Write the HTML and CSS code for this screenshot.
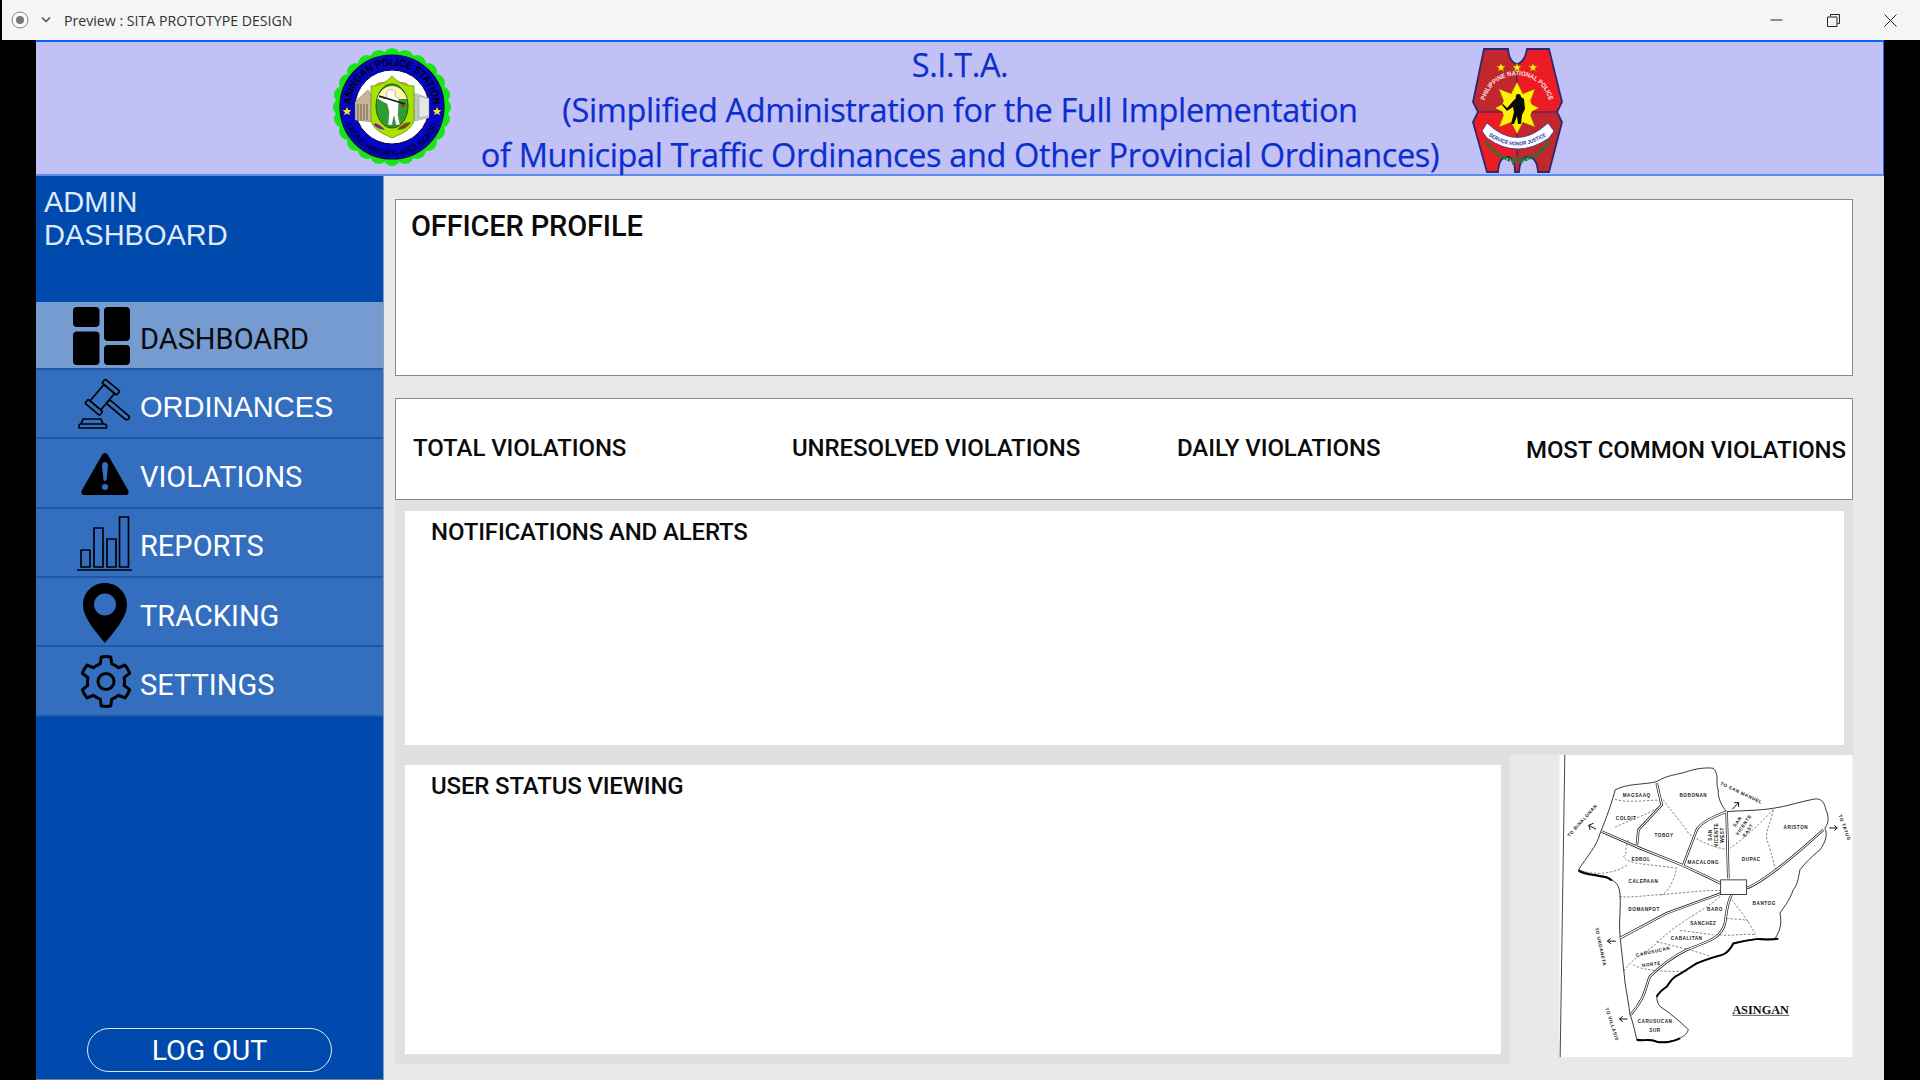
FILE: index.html
```html
<!DOCTYPE html>
<html lang="en">
<head>
  <meta charset="UTF-8">
  <meta name="viewport" content="width=device-width, initial-scale=1.0">
  <title>Preview : SITA PROTOTYPE DESIGN</title>
  <link rel="stylesheet" href="styles.css">
</head>
<body>
  <div class="titlebar">
    <svg class="rec-icon" width="20" height="20" viewBox="0 0 20 20">
      <circle cx="10" cy="10" r="8" fill="#fafafa" stroke="#8a8a8a" stroke-width="1"/>
      <circle cx="10" cy="10" r="4" fill="#777"/>
    </svg>
    <svg class="chev" width="12" height="8" viewBox="0 0 12 8">
      <path d="M2 1.5 L6 5.5 L10 1.5" fill="none" stroke="#444" stroke-width="1.3"/>
    </svg>
    <span class="titlebar-text">Preview : SITA PROTOTYPE DESIGN</span>
    <div class="win-controls">
      <svg width="13" height="13" viewBox="0 0 13 13"><path d="M0.5 6 H12.5" stroke="#222" stroke-width="1"/></svg>
      <svg width="13" height="13" viewBox="0 0 13 13"><path d="M3.5 2.5 V0.5 H12.5 V9.5 H10.5 M0.5 3 H10 V12.5 H0.5 Z" fill="none" stroke="#222" stroke-width="1"/></svg>
      <svg width="13" height="13" viewBox="0 0 13 13"><path d="M0.5 0.5 L12.5 12.5 M12.5 0.5 L0.5 12.5" stroke="#222" stroke-width="1"/></svg>
    </div>
  </div>

  <div class="app">
    <header class="banner">
      <svg class="logo-left" width="135" height="130" viewBox="0 0 135 130">
        <defs>
          <path id="arcTop" d="M26.8 73 A41 41 0 1 1 107.2 73"/>
          <path id="arcBottom" d="M19 75 A49 49 0 0 0 115 75"/>
        </defs>
        <g fill="#16e616">
          <circle cx="67" cy="15" r="9"/><circle cx="80" cy="17" r="9"/><circle cx="92" cy="22" r="9"/><circle cx="103" cy="30" r="9"/>
          <circle cx="111" cy="41" r="9"/><circle cx="116" cy="53" r="9"/><circle cx="117" cy="65" r="9"/><circle cx="116" cy="77" r="9"/>
          <circle cx="111" cy="89" r="9"/><circle cx="103" cy="100" r="9"/><circle cx="92" cy="108" r="9"/><circle cx="80" cy="113" r="9"/>
          <circle cx="67" cy="115" r="9"/><circle cx="54" cy="113" r="9"/><circle cx="42" cy="108" r="9"/><circle cx="31" cy="100" r="9"/>
          <circle cx="23" cy="89" r="9"/><circle cx="18" cy="77" r="9"/><circle cx="17" cy="65" r="9"/><circle cx="18" cy="53" r="9"/>
          <circle cx="23" cy="41" r="9"/><circle cx="31" cy="30" r="9"/><circle cx="42" cy="22" r="9"/><circle cx="54" cy="17" r="9"/>
        </g>
        <circle cx="67" cy="65" r="52" fill="#0505c8" stroke="#0a0a3a" stroke-width="1.2"/>
        <circle cx="67" cy="65" r="37" fill="#fff" stroke="#0a0a3a" stroke-width="1"/>
        <text class="seal-top"><textPath href="#arcTop" startOffset="50%" text-anchor="middle" textLength="124" lengthAdjust="spacingAndGlyphs">ASINGAN POLICE STATION</textPath></text>
        <text class="seal-bottom"><textPath href="#arcBottom" startOffset="50%" text-anchor="middle" textLength="118" lengthAdjust="spacingAndGlyphs">LAGING HANDANG MAGLINGKOD</textPath></text>
        <path d="M22 65 l1.3 3 3.2 .2 -2.5 2 .9 3.1 -2.9 -1.7 -2.9 1.7 .9 -3.1 -2.5 -2 3.2 -.2Z" fill="#ffe600"/>
        <path d="M112 65 l1.3 3 3.2 .2 -2.5 2 .9 3.1 -2.9 -1.7 -2.9 1.7 .9 -3.1 -2.5 -2 3.2 -.2Z" fill="#ffe600"/>
        <path d="M30 78 V60 L43 48 L50 60 V80Z" fill="#c9b59a" stroke="#6b5a48" stroke-width=".5"/>
        <path d="M33 62 V78 M36 62 V78 M39 62 V78 M42 62 V78" stroke="#6b5a48" stroke-width="1"/>
        <path d="M88 50 L104 56 V76 L88 80Z" fill="#b9c9b9"/>
        <path d="M94 54 L104 57 V74 L94 76Z" fill="#e6e6e6" stroke="#8a9a8a" stroke-width=".5"/>
        <path d="M46 44 Q58 44 67 34 Q76 44 89 44 V78 Q88 88 67 96 Q47 88 46 78Z" fill="#a5e300" stroke="#6e8f20" stroke-width=".8"/>
        <path d="M50 44 Q54 40 60 41 M84 44 Q80 40 74 41" fill="none" stroke="#b89a30" stroke-width="1.500"/>
        <ellipse cx="67" cy="64" rx="16" ry="22" fill="#2f9c2f" stroke="#304a10" stroke-width="1"/>
        <path d="M52 57 A16 20 0 0 1 82 57Z" fill="#fdf5b0"/>
        <path d="M62 54 a4.500 4.500 0 1 1 8 0 l4 3 -1 16 2 10 h-4 l-2 -9 -2 9 h-4 l1 -13 -2 -8 -4 -2 -5 -3 1 -2 6 2Z" fill="#fff" stroke="#555" stroke-width=".4"/>
        <path d="M54 54 L80 62" stroke="#111" stroke-width="1.400"/>
        <circle cx="78" cy="63" r="1.600" fill="#d01020"/>
        <path d="M50 81 Q56 83 60 88 Q52 87 49 83Z" fill="#7a1fa0"/>
        <path d="M72 88 Q78 80 86 80 Q83 87 72 88Z" fill="#7a4a1e"/>
      </svg>

      <div class="banner-title">
        <div>S.I.T.A.</div>
        <div>(Simplified Administration for the Full Implementation</div>
        <div>of Municipal Traffic Ordinances and Other Provincial Ordinances)</div>
      </div>

      <svg class="logo-right" width="105" height="130" viewBox="0 0 105 130">
        <defs>
          <path id="arcPnp" d="M19.500 70 A33 33 0 1 1 84.500 70"/>
          <path id="arcMotto" d="M21 90 Q52 113 84 90"/>
          <clipPath id="pnpClip">
            <path d="M19 5 H43 Q44 18 52 20 Q60 18 62 5 H84 L97 58 L92 68 L97 78 L84 128 H73 Q72 113 63 113 Q55 113 54 128 H50 Q50 113 42 113 Q34 113 33 128 H22 L8 78 L13 68 L8 58Z"/>
          </clipPath>
        </defs>
        <path d="M19 5 H43 Q44 18 52 20 Q60 18 62 5 H84 L97 58 L92 68 L97 78 L84 128 H73 Q72 113 63 113 Q55 113 54 128 H50 Q50 113 42 113 Q34 113 33 128 H22 L8 78 L13 68 L8 58Z" fill="#ed1c24"/>
        <g clip-path="url(#pnpClip)">
          <rect x="0" y="0" width="52" height="68" fill="#c1272d"/>
          <rect x="52" y="68" width="52" height="62" fill="#c1272d"/>
        </g>
        <path d="M19 5 H43 Q44 18 52 20 Q60 18 62 5 H84 L97 58 L92 68 L97 78 L84 128 H73 Q72 113 63 113 Q55 113 54 128 H50 Q50 113 42 113 Q34 113 33 128 H22 L8 78 L13 68 L8 58Z" fill="none" stroke="#2b2a6e" stroke-width="1.800"/>
        <path d="M13 68 H92 M52 20 V113" stroke="#2b2a6e" stroke-width="1.200"/>
        <g fill="#fff200" stroke="#7a5a00" stroke-width=".3">
          <path d="M36 19 l1.200 3 3.200 .2 -2.500 2 .9 3.100 -2.800 -1.700 -2.800 1.700 .9 -3.100 -2.500 -2 3.200 -.2Z"/>
          <path d="M52 19 l1.200 3 3.200 .2 -2.500 2 .9 3.100 -2.800 -1.700 -2.800 1.700 .9 -3.100 -2.500 -2 3.200 -.2Z"/>
          <path d="M68 19 l1.200 3 3.200 .2 -2.500 2 .9 3.100 -2.800 -1.700 -2.800 1.700 .9 -3.100 -2.500 -2 3.200 -.2Z"/>
        </g>
        <g fill="#fff200" stroke="#5a4a00" stroke-width=".3">
          <path d="M52 38 L58 50 H46Z"/><path d="M52 90 L58 78 H46Z"/>
          <path d="M30 64 L42 58 V70Z"/><path d="M74 64 L62 58 V70Z"/>
          <path d="M34 45 L47 50 L39 58Z"/><path d="M70 45 L57 50 L65 58Z"/>
          <path d="M34 83 L39 70 L47 78Z"/><path d="M70 83 L65 70 L57 78Z"/>
        </g>
        <circle cx="52" cy="64" r="15" fill="#fff200"/>
        <path d="M53 50 a3 3 0 0 1 3 3 l3 2 1 10 -3 6 -1 9 h-3 l-1 -8 -3 8 h-3 l3 -12 -1 -5 -6 4 -5 -6 1 -1 4 4 6 -7 3 -3 a3 3 0 0 1 2 -4Z" fill="#0a0a0a"/>
        <text class="pnp-arc"><textPath href="#arcPnp" startOffset="50%" text-anchor="middle" textLength="88" lengthAdjust="spacingAndGlyphs">PHILIPPINE NATIONAL POLICE</textPath></text>
        <path d="M17 87 L22 79 Q52 108 83 79 L89 87 L84 94 Q52 116 22 94Z" fill="#fff" stroke="#2b3a9a" stroke-width=".8"/>
        <text class="pnp-motto"><textPath href="#arcMotto" startOffset="50%" text-anchor="middle" textLength="62" lengthAdjust="spacingAndGlyphs">SERVICE HONOR JUSTICE</textPath></text>
        <path d="M21 98 Q30 113 50 117 M84 98 Q74 113 54 117" fill="none" stroke="#1d7a35" stroke-width="3.500" stroke-dasharray="3 1"/>
        <path d="M47 112 L57 120 M57 112 L47 120" stroke="#1d7a35" stroke-width="1.500"/>
      </svg>
    </header>

    <div class="layout">
      <aside class="sidebar">
        <div class="brand">ADMIN<br>DASHBOARD</div>
        <nav class="menu">
          <a class="menu-item active">
            <span class="menu-icon ic-dash">
              <svg width="57" height="58" viewBox="0 0 57 58">
                <rect x="0" y="0" width="26.500" height="20" rx="4"/>
                <rect x="0" y="24.500" width="26.500" height="33.500" rx="4"/>
                <rect x="31" y="0" width="26" height="34" rx="4"/>
                <rect x="31" y="38" width="26" height="20" rx="4"/>
              </svg>
            </span>
            <span class="menu-label">DASHBOARD</span>
          </a>
          <a class="menu-item">
            <span class="menu-icon ic-gavel">
              <svg width="52" height="50" viewBox="0 0 52 50" class="line-icon">
                <path d="M5 40 H23 L25 45 H3 Z M1 49 Q0.500 45 3 45 H26 Q29 45 28.500 49 Z"/>
                <g transform="translate(24.500 18) rotate(40)">
                  <rect x="-9.500" y="-15.500" width="19" height="5" rx="1.200"/>
                  <rect x="-9.500" y="11" width="19" height="5" rx="1.200"/>
                  <rect x="-7" y="-10.500" width="14" height="21.500"/>
                  <rect x="7" y="-2.500" width="27" height="5" rx="2.500"/>
                </g>
              </svg>
            </span>
            <span class="menu-label label-arial">ORDINANCES</span>
          </a>
          <a class="menu-item">
            <span class="menu-icon ic-warn">
              <svg width="48" height="42" viewBox="0 0 48 42">
                <path d="M24 0 Q26 0 27 2 L47 37 Q49 42 44 42 H4 Q-1 42 1 37 L21 2 Q22 0 24 0Z"/>
                <path d="M24 9 Q27 9 27 13 L25.500 27 Q24 29 22.500 27 L21 13 Q21 9 24 9Z" fill="#336ebf"/>
                <circle cx="24" cy="34" r="3" fill="#336ebf"/>
              </svg>
            </span>
            <span class="menu-label">VIOLATIONS</span>
          </a>
          <a class="menu-item">
            <span class="menu-icon ic-bars">
              <svg width="55" height="55" viewBox="0 0 55 55" class="line-icon">
                <rect x="4" y="34" width="9" height="17"/>
                <rect x="17" y="12" width="9" height="39"/>
                <rect x="30" y="23" width="9" height="28"/>
                <rect x="42.500" y="1" width="9" height="50"/>
                <path d="M0 54 H55"/>
              </svg>
            </span>
            <span class="menu-label">REPORTS</span>
          </a>
          <a class="menu-item">
            <span class="menu-icon ic-pin">
              <svg width="44" height="60" viewBox="0 0 44 60">
                <path fill-rule="evenodd" d="M22 0 C34 0 44 9 44 22 C44 35 30 50 22 60 C14 50 0 35 0 22 C0 9 10 0 22 0Z M22 10.500 A11 11 0 1 0 22 32.500 A11 11 0 1 0 22 10.500Z"/>
              </svg>
            </span>
            <span class="menu-label">TRACKING</span>
          </a>
          <a class="menu-item">
            <span class="menu-icon ic-gear">
              <svg width="52" height="53" viewBox="-26 -26.500 52 53" class="line-icon gear">
                <path id="tooth" d="M-9.250 -16.020 A18.500 18.500 0 0 1 -5.720 -17.590 L-4.770 -24.540 A25 25 0 0 1 4.770 -24.540 L5.720 -17.590 A18.500 18.500 0 0 1 9.250 -16.020"/>
                <use href="#tooth" transform="rotate(60)"/>
                <use href="#tooth" transform="rotate(120)"/>
                <use href="#tooth" transform="rotate(180)"/>
                <use href="#tooth" transform="rotate(240)"/>
                <use href="#tooth" transform="rotate(300)"/>
                <circle cx="0" cy="0" r="8"/>
              </svg>
            </span>
            <span class="menu-label">SETTINGS</span>
          </a>
        </nav>
        <button class="logout" type="button">LOG OUT</button>
      </aside>

      <main class="content">
        <section class="card profile">OFFICER PROFILE</section>
        <section class="card stats">
          <div>TOTAL VIOLATIONS</div>
          <div>UNRESOLVED VIOLATIONS</div>
          <div>DAILY VIOLATIONS</div>
          <div class="stat-low">MOST COMMON VIOLATIONS</div>
        </section>
        <section class="band notif-band">
          <div class="panel">NOTIFICATIONS AND ALERTS</div>
        </section>
        <div class="bottom-row">
          <section class="band user-band">
            <div class="panel">USER STATUS VIEWING</div>
          </section>
          <svg class="map" width="294" height="302" viewBox="178 45 880 907">
            <rect x="178" y="45" width="880" height="907" fill="#fff"/>
            <path d="M194 45 L180 952" stroke="#222" stroke-width="2.500" fill="none"/>
            <path class="map-line" d="M235 390 C260 350 290 320 300 280 C320 230 335 190 345 150 C380 130 430 135 470 125 C500 105 530 105 560 95 C590 85 620 82 640 85 C660 105 645 130 655 150 C652 170 665 200 680 215 C720 212 780 212 820 205 C860 200 900 185 940 178 C965 172 975 190 978 210 C985 225 990 245 975 265 C985 285 975 310 960 330 C935 350 915 370 900 390 C895 420 890 440 880 450 C870 480 850 505 840 520 C845 545 845 565 825 597 C800 600 780 595 770 597 C745 600 720 605 700 610 C690 630 680 640 665 645 C640 650 615 660 590 670 C565 685 545 700 525 710 C510 720 505 735 500 740 C485 750 475 760 470 770 C470 785 475 795 480 800 C510 820 540 845 565 870 C560 885 550 890 540 895 C520 905 490 910 470 905 C450 895 430 905 410 900 C405 880 400 850 390 825 C385 790 380 760 375 730 C370 680 365 640 360 590 C355 540 365 490 358 450 C355 435 345 425 335 420 C320 405 305 410 290 405 C270 405 250 395 235 390Z"/>
            <path class="map-thick" d="M235 392 C250 405 270 402 290 407 C305 412 320 408 335 422"/>
            <path class="map-thick" d="M835 597 C800 602 780 596 770 598 C745 601 720 606 700 611 C690 631 680 641 665 646 C640 651 615 661 590 671 C565 686 545 701 525 711 C510 721 505 736 500 741 C485 751 475 761 470 771"/>
            <path class="map-thick" d="M410 900 C430 905 450 896 470 906 C490 911 520 906 540 896"/>
            <g class="map-dash">
              <path d="M345 178 C380 190 440 180 490 180 C510 210 540 240 565 280 C590 300 630 320 685 330"/>
              <path d="M345 262 C390 240 440 225 480 200"/>
              <path d="M385 300 C370 325 385 345 370 350 C385 375 430 370 530 385 C520 430 500 465 480 465"/>
              <path d="M235 390 C290 410 350 400 385 372"/>
              <path d="M358 470 C400 475 440 465 480 465 C540 460 610 450 665 452"/>
              <path d="M820 210 C790 240 740 290 690 325"/>
              <path d="M820 210 C810 260 790 280 805 310 C815 340 820 370 830 395"/>
              <path d="M695 480 C720 510 750 550 770 590"/>
              <path d="M660 470 C620 510 540 540 470 610 C440 640 400 650 370 695"/>
              <path d="M680 535 C700 540 730 535 745 545"/>
              <path d="M660 585 C690 590 730 580 765 585"/>
              <path d="M470 605 C520 620 580 630 630 650"/>
              <path d="M400 675 C430 695 500 695 560 695"/>
              <path d="M540 572 C570 575 600 580 640 585"/>
            </g>
            <g class="map-road">
              <path d="M305 275 L420 325 L545 375 L620 410 L665 432"/>
              <path d="M470 130 L485 195 L415 270 L410 320"/>
              <path d="M680 215 C640 230 600 250 590 270 L550 375"/>
              <path d="M680 215 L685 415"/>
              <path d="M740 445 C780 430 860 370 970 270"/>
              <path d="M665 460 L500 520 L360 595"/>
              <path d="M695 465 C680 490 680 520 675 550 C665 590 640 600 560 630 C520 650 480 680 450 710 C435 740 440 770 392 825"/>
            </g>
            <g class="map-road-in">
              <path d="M305 275 L420 325 L545 375 L620 410 L665 432"/>
              <path d="M470 130 L485 195 L415 270 L410 320"/>
              <path d="M680 215 C640 230 600 250 590 270 L550 375"/>
              <path d="M680 215 L685 415"/>
              <path d="M740 445 C780 430 860 370 970 270"/>
              <path d="M665 460 L500 520 L360 595"/>
              <path d="M695 465 C680 490 680 520 675 550 C665 590 640 600 560 630 C520 650 480 680 450 710 C435 740 440 770 392 825"/>
            </g>
            <rect x="662" y="420" width="78" height="44" fill="#fff" stroke="#222" stroke-width="2.500"/>
            <g class="map-label" text-anchor="middle">
              <text x="410" y="170">MAGSAAQ</text>
              <text x="580" y="172">BOBONAN</text>
              <text x="378" y="241">COLDIT</text>
              <text x="492" y="291">TOBOY</text>
              <text x="888" y="268">ARISTON</text>
              <text x="754" y="363">DUPAC</text>
              <text x="610" y="373">MACALONG</text>
              <text x="423" y="362">EDBOL</text>
              <text x="430" y="430">CALEPAAN</text>
              <text x="432" y="513">DOMANPOT</text>
              <text x="793" y="495">BANTOG</text>
              <text x="645" y="515">BARO</text>
              <text x="610" y="557">SANCHEZ</text>
              <text x="560" y="602">CABALITAN</text>
              <text x="465" y="850">CARUSUCAN</text>
              <text x="465" y="878">SUR</text>
              <text transform="translate(460 640) rotate(-12)">CARUSUCAN</text>
              <text transform="translate(455 678) rotate(-8)">NORTE</text>
              <text transform="translate(637 285) rotate(-90)">SAN</text>
              <text transform="translate(654 285) rotate(-90)">VICENTE</text>
              <text transform="translate(671 285) rotate(-90)">WEST</text>
              <text transform="translate(716 248) rotate(-55)">SAN</text>
              <text transform="translate(735 258) rotate(-55)">VICENTE</text>
              <text transform="translate(748 274) rotate(-55)">EAST</text>
              <text transform="translate(722 163) rotate(25)">TO SAN MANUEL</text>
              <text transform="translate(250 245) rotate(-48)">TO BINALONAN</text>
              <text transform="translate(1030 265) rotate(70)">TO TAYUG</text>
              <text transform="translate(297 622) rotate(78)">TO URDANETA</text>
              <text transform="translate(331 855) rotate(72)">TO VILLASIS</text>
            </g>
            <g class="map-arrow">
              <path d="M697 208 L716 188 M703 188 H716 V201"/>
              <path d="M288 268 L266 256 M280 250 L266 256 L270 270"/>
              <path d="M988 264 H1012 M1003 256 L1012 264 L1003 272"/>
              <path d="M347 604 H322 M332 596 L322 604 L332 612"/>
              <path d="M382 838 H358 M368 830 L358 838 L368 846"/>
            </g>
            <text class="map-name" x="782" y="822" text-anchor="middle">ASINGAN</text>
            <path d="M697 827 H868" stroke="#111" stroke-width="2"/>
          </svg>
        </div>
      </main>
    </div>
  </div>
</body>
</html>
```

FILE: styles.css
```css
* {
  box-sizing: border-box;
}
html, body {
  margin: 0;
  height: 100%;
  overflow: hidden;
  background-color: #000;
}
body {
  font-family: Roboto, Arial, sans-serif;
}

/* window chrome */
.titlebar {
  height: 40px;
  margin-left: 2px;
  background-color: #f5f5f5;
  display: flex;
  align-items: center;
  padding-left: 8px;
}
.chev {
  margin-left: 10px;
}
.titlebar-text {
  margin-left: 12px;
  font-family: "Open Sans", sans-serif;
  font-size: 14.150px;
  color: #333;
}
.win-controls {
  margin-left: auto;
  display: flex;
  gap: 44px;
  padding-right: 23px;
}

/* app frame */
.app {
  margin-left: 36px;
  width: 1848px;
  height: 1040px;
  display: flex;
  flex-direction: column;
  background-color: #e9e9e9;
}
.banner {
  height: 136px;
  flex: none;
  display: flex;
  background-color: #c2c1f6;
  border-top: 2px solid #0b62f5;
  border-bottom: 2px solid #5d8cf0;
  border-right: 1px solid #2f6ae8;
  padding-left: 289px;
}
.logo-left {
  flex: none;
}
.banner-title {
  width: 1000px;
  text-align: center;
  font-family: "Open Sans", sans-serif;
  font-size: 32.500px;
  letter-spacing: -0.370px;
  line-height: 45px;
  color: #0b2fce;
  -webkit-text-stroke: 0.25px #0b2fce;
  white-space: nowrap;
}
.logo-right {
  margin-left: 5px;
  margin-top: 2px;
  flex: none;
}
.seal-top {
  font-family: "Liberation Sans", sans-serif;
  font-size: 11px;
  font-weight: 700;
  fill: #000;
}
.seal-bottom {
  font-family: "Liberation Sans", sans-serif;
  font-size: 9px;
  fill: #000;
}
.pnp-arc {
  font-family: "Liberation Sans", sans-serif;
  font-size: 6.500px;
  font-weight: 700;
  fill: #f5e8e8;
}
.pnp-motto {
  font-family: "Liberation Sans", sans-serif;
  font-size: 5.500px;
  font-weight: 700;
  fill: #2b3a9a;
}

.layout {
  flex: 1;
  display: flex;
  min-height: 0;
}

/* sidebar */
.sidebar {
  width: 348px;
  flex: none;
  background-color: #004aad;
  border-right: 1px solid #8d9db5;
  border-bottom: 1px solid #6f7f9a;
  display: flex;
  flex-direction: column;
}
.brand {
  height: 126px;
  flex: none;
  padding: 10px 0 0 8px;
  font-family: "Liberation Sans", Arial, sans-serif;
  font-size: 29px;
  line-height: 33px;
  color: #dfe9fa;
}
.menu {
  display: flex;
  flex-direction: column;
}
.menu-item {
  height: 69.330px;
  display: flex;
  align-items: center;
  font-size: 29px;
  color: #fff;
  background-color: #336ebf;
  border-bottom: 2px solid #1f57a6;
}
.menu-item.active {
  height: 68px;
  background-color: #769bd1;
  color: #0b0b0b;
}
.menu-icon {
  width: 104px;
  flex: none;
  display: flex;
}
.menu-icon svg {
  display: block;
}
.ic-dash svg { margin: 2px 0 0 37px; }
.ic-gavel svg { margin-left: 42px; }
.ic-warn svg { margin: 2px 0 0 45px; }
.ic-bars svg { margin: 3px 0 0 41px; }
.ic-pin svg { margin: 2px 0 0 47px; }
.ic-gear svg { margin: 2px 0 0 44px; }
.menu-label {
  padding-top: 8px;
}
.label-arial {
  font-family: "Liberation Sans", Arial, sans-serif;
}
.line-icon rect, .line-icon path, .line-icon circle {
  fill: none;
  stroke: #000;
  stroke-width: 1.700;
  stroke-linejoin: round;
  stroke-linecap: round;
}
.line-icon.gear path, .line-icon.gear circle {
  stroke-width: 3;
}
.logout {
  margin: auto 0 7px 51px;
  width: 245px;
  height: 44px;
  border: 1px solid #dfe7f5;
  border-radius: 22px;
  background: none;
  font-family: Roboto, sans-serif;
  font-size: 28.500px;
  color: #fff;
  padding: 0;
}

/* main area */
.content {
  flex: 1;
  padding: 23px 31px 0 11px;
  font-weight: 500;
  color: #0b0b0b;
}
.card {
  background-color: #fff;
  border: 1px solid #8a8a8a;
}
.profile {
  height: 177px;
  padding: 9px 15px;
  font-size: 29px;
  letter-spacing: -0.150px;
  line-height: 34px;
}
.stats {
  height: 102px;
  margin-top: 22px;
  padding: 34px 0 0 17px;
  display: grid;
  grid-template-columns: 379px 385px 349px auto;
  font-size: 24px;
  letter-spacing: -0.080px;
  line-height: 30px;
  white-space: nowrap;
}
.stat-low {
  margin-top: 2px;
}
.band {
  background-color: #e0e0e0;
}
.panel {
  height: 100%;
  background-color: #fff;
  padding: 6px 26px;
  font-size: 24px;
  letter-spacing: -0.150px;
  line-height: 30px;
}
.notif-band {
  height: 255px;
  padding: 11px 9px 10px 10px;
}
.bottom-row {
  display: flex;
  align-items: flex-start;
}
.user-band {
  width: 1115px;
  height: 309px;
  padding: 10px 9px 10px 10px;
}
.map {
  display: block;
  margin-left: 49px;
  flex: none;
}

/* map drawing */
.map-line {
  fill: none;
  stroke: #111;
  stroke-width: 2.500;
}
.map-thick {
  fill: none;
  stroke: #000;
  stroke-width: 6;
}
.map-dash path {
  fill: none;
  stroke: #333;
  stroke-width: 1.800;
  stroke-dasharray: 7 5;
}
.map-road path {
  fill: none;
  stroke: #111;
  stroke-width: 7.500;
}
.map-road-in path {
  fill: none;
  stroke: #fff;
  stroke-width: 3.500;
}
.map-label text {
  font-family: "Liberation Sans", sans-serif;
  font-size: 14px;
  font-weight: 700;
  letter-spacing: 1.600px;
  fill: #222;
}
.map-arrow path {
  fill: none;
  stroke: #111;
  stroke-width: 3;
}
.map-name {
  font-family: "Liberation Serif", serif;
  font-size: 37px;
  font-weight: 700;
  fill: #111;
}
```
